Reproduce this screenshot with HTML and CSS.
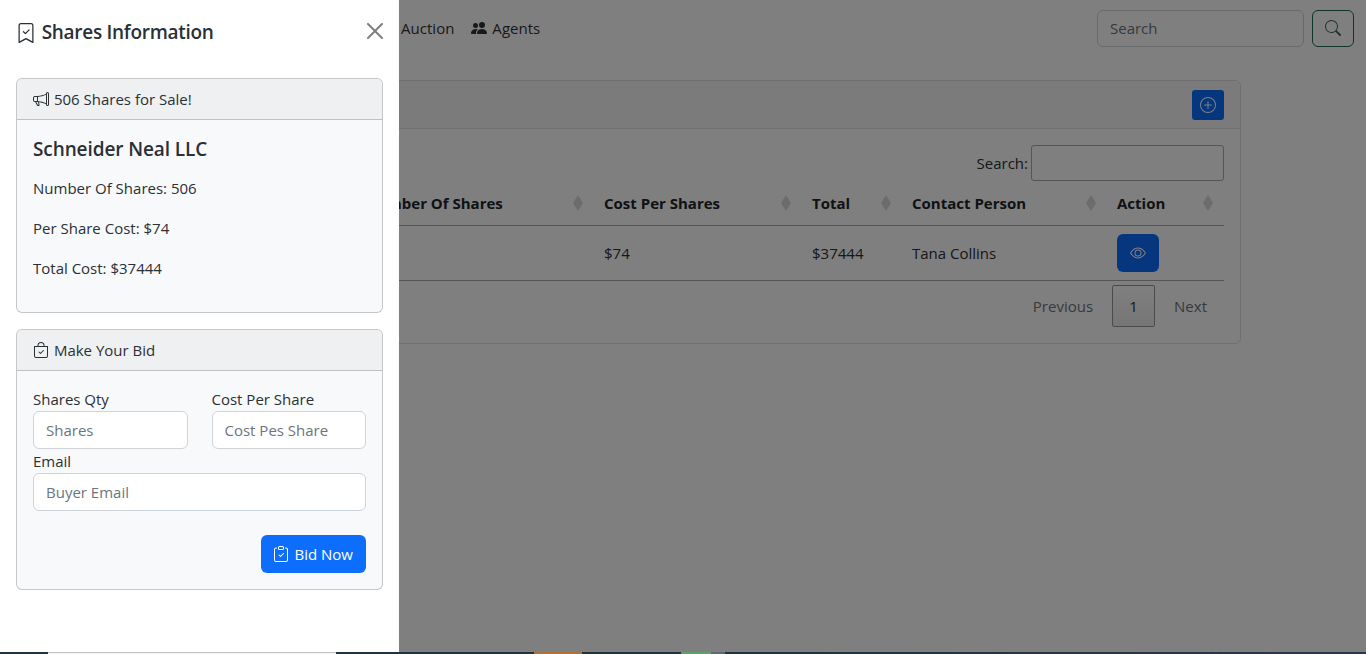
FILE: index.html
```html
<!DOCTYPE html>
<html lang="en">
<head>
<meta charset="utf-8">
<title>Shares Information</title>
<link rel="stylesheet" href="styles.css">
</head>
<body>
<div class="screen">
  <div class="page">
    <nav class="navbar">
      <ul class="nav-links">
        <li>Auction</li>
        <li class="nav-agents">
          <svg class="icon" viewBox="0 0 16 16" fill="currentColor"><path d="M7 14s-1 0-1-1 1-4 5-4 5 3 5 4-1 1-1 1H7zm4-6a3 3 0 1 0 0-6 3 3 0 0 0 0 6z"/><path d="M5.216 14A2.238 2.238 0 0 1 5 13c0-1.355.68-2.75 1.936-3.72A6.325 6.325 0 0 0 5 9c-4 0-5 3-5 4s1 1 1 1h4.216z"/><path d="M4.5 8a2.5 2.5 0 1 0 0-5 2.5 2.5 0 0 0 0 5z"/></svg>
          Agents
        </li>
      </ul>
      <form class="nav-search">
        <input class="control nav-input" placeholder="Search">
        <button type="button" class="btn-search">
          <svg class="icon" viewBox="0 0 16 16" fill="currentColor"><path d="M11.742 10.344a6.5 6.5 0 1 0-1.397 1.398h-.001c.03.04.062.078.098.115l3.85 3.85a1 1 0 0 0 1.415-1.414l-3.85-3.85a1.007 1.007 0 0 0-.115-.1zM12 6.5a5.5 5.5 0 1 1-11 0 5.5 5.5 0 0 1 11 0z"/></svg>
        </button>
      </form>
    </nav>

    <section class="list-card">
      <header class="list-head">
        <button type="button" class="btn-add">
          <svg class="icon" viewBox="0 0 16 16" fill="currentColor"><path d="M8 15A7 7 0 1 1 8 1a7 7 0 0 1 0 14zm0 1A8 8 0 1 0 8 0a8 8 0 0 0 0 16z"/><path d="M8 4a.5.5 0 0 1 .5.5v3h3a.5.5 0 0 1 0 1h-3v3a.5.5 0 0 1-1 0v-3h-3a.5.5 0 0 1 0-1h3v-3A.5.5 0 0 1 8 4z"/></svg>
        </button>
      </header>
      <div class="list-body">
        <label class="table-filter">Search:<input class="filter-input"></label>
        <table class="data-table">
          <colgroup>
            <col class="col-a"><col class="col-b"><col class="col-c"><col class="col-d"><col class="col-e"><col class="col-f">
          </colgroup>
          <thead>
            <tr>
              <th></th>
              <th><span class="th-label">Number Of Shares</span><i class="sort"></i></th>
              <th><span class="th-label">Cost Per Shares</span><i class="sort"></i></th>
              <th><span class="th-label">Total</span><i class="sort"></i></th>
              <th><span class="th-label">Contact Person</span><i class="sort"></i></th>
              <th><span class="th-label">Action</span><i class="sort"></i></th>
            </tr>
          </thead>
          <tbody>
            <tr>
              <td></td>
              <td></td>
              <td>$74</td>
              <td>$37444</td>
              <td>Tana Collins</td>
              <td>
                <button type="button" class="btn-view">
                  <svg class="icon" viewBox="0 0 16 16" fill="currentColor"><path d="M16 8s-3-5.5-8-5.5S0 8 0 8s3 5.5 8 5.5S16 8 16 8zM1.173 8a13.133 13.133 0 0 1 1.66-2.043C4.12 4.668 5.88 3.5 8 3.5c2.12 0 3.879 1.168 5.168 2.457A13.133 13.133 0 0 1 14.828 8c-.058.087-.122.183-.195.288-.335.48-.83 1.12-1.465 1.755C11.879 11.332 10.119 12.5 8 12.5c-2.12 0-3.879-1.168-5.168-2.457A13.134 13.134 0 0 1 1.172 8z"/><path d="M8 5.5a2.5 2.5 0 1 0 0 5 2.5 2.5 0 0 0 0-5zM4.5 8a3.5 3.5 0 1 1 7 0 3.5 3.5 0 0 1-7 0z"/></svg>
                </button>
              </td>
            </tr>
          </tbody>
        </table>
        <div class="pager">
          <span class="pager-link">Previous</span>
          <span class="pager-current">1</span>
          <span class="pager-link pager-next">Next</span>
        </div>
      </div>
    </section>

    <div class="backdrop"></div>

    <aside class="panel">
      <header class="panel-head">
        <h5 class="panel-title">
          <svg class="icon icon-title" viewBox="0 0 16 16" fill="currentColor"><path fill-rule="evenodd" d="M10.854 5.146a.5.5 0 0 1 0 .708l-3 3a.5.5 0 0 1-.708 0l-1.5-1.5a.5.5 0 1 1 .708-.708L7.5 7.793l2.646-2.647a.5.5 0 0 1 .708 0z"/><path d="M2 2a2 2 0 0 1 2-2h8a2 2 0 0 1 2 2v13.5a.5.5 0 0 1-.777.416L8 13.101l-5.223 2.815A.5.5 0 0 1 2 15.5V2zm2-1a1 1 0 0 0-1 1v12.566l4.723-2.482a.5.5 0 0 1 .554 0L13 14.566V2a1 1 0 0 0-1-1H4z"/></svg>
          Shares Information
        </h5>
        <button type="button" class="btn-close" aria-label="Close">
          <svg viewBox="0 0 16 16" fill="currentColor"><path d="M.293.293a1 1 0 011.414 0L8 6.586 14.293.293a1 1 0 111.414 1.414L9.414 8l6.293 6.293a1 1 0 01-1.414 1.414L8 9.414l-6.293 6.293a1 1 0 01-1.414-1.414L6.586 8 .293 1.707a1 1 0 010-1.414z"/></svg>
        </button>
      </header>
      <div class="panel-body">
        <div class="card card-info">
          <div class="card-head">
            <svg class="icon" viewBox="0 0 16 16" fill="currentColor"><path d="M13 2.5a1.5 1.5 0 0 1 3 0v11a1.5 1.5 0 0 1-3 0v-.214c-2.162-1.241-4.49-1.843-6.912-2.083l.405 2.712A1 1 0 0 1 5.51 15.1h-.548a1 1 0 0 1-.916-.599l-1.85-3.49a68.14 68.14 0 0 0-.202-.003A2.014 2.014 0 0 1 0 9V7a2.02 2.02 0 0 1 1.992-2.013 74.663 74.663 0 0 0 2.483-.075c3.043-.154 6.148-.849 8.525-2.199V2.5zm1 0v11a.5.5 0 0 0 1 0v-11a.5.5 0 0 0-1 0zm-1 1.35c-2.344 1.205-5.209 1.842-8 2.033v4.233c.18.01.359.022.537.036 2.568.189 5.093.744 7.463 1.993V3.85zm-9 6.215v-4.13a95.09 95.09 0 0 1-1.992.052A1.02 1.02 0 0 0 1 7v2c0 .55.448 1.002 1.006 1.009A60.49 60.49 0 0 1 4 10.065zm-.657.975 1.609 3.037.01.024h.548l-.002-.014-.443-2.966a68.019 68.019 0 0 0-1.722-.082z"/></svg>
            506 Shares for Sale!
          </div>
          <div class="card-body">
            <h5 class="company">Schneider Neal LLC</h5>
            <p>Number Of Shares: 506</p>
            <p>Per Share Cost: $74</p>
            <p>Total Cost: $37444</p>
          </div>
        </div>

        <div class="card">
          <div class="card-head">
            <svg class="icon" viewBox="0 0 16 16" fill="currentColor"><path fill-rule="evenodd" d="M10.854 8.146a.5.5 0 0 1 0 .708l-3 3a.5.5 0 0 1-.708 0l-1.5-1.5a.5.5 0 0 1 .708-.708L7.5 10.793l2.646-2.647a.5.5 0 0 1 .708 0z"/><path d="M8 1a2.5 2.5 0 0 1 2.5 2.5V4h-5v-.5A2.5 2.5 0 0 1 8 1zm3.5 3v-.5a3.5 3.5 0 1 0-7 0V4H1v10a2 2 0 0 0 2 2h10a2 2 0 0 0 2-2V4h-3.5zM2 5h12v9a1 1 0 0 1-1 1H3a1 1 0 0 1-1-1V5z"/></svg>
            Make Your Bid
          </div>
          <form class="card-body bid-form">
            <div class="field">
              <label>Shares Qty</label>
              <input class="control" placeholder="Shares">
            </div>
            <div class="field">
              <label>Cost Per Share</label>
              <input class="control" placeholder="Cost Pes Share">
            </div>
            <div class="field field-wide">
              <label>Email</label>
              <input class="control" placeholder="Buyer Email">
            </div>
            <div class="bid-actions">
              <button type="button" class="btn-bid">
                <svg class="icon" viewBox="0 0 16 16" fill="currentColor"><path fill-rule="evenodd" d="M10.854 7.146a.5.5 0 0 1 0 .708l-3 3a.5.5 0 0 1-.708 0l-1.5-1.5a.5.5 0 1 1 .708-.708L7.5 9.793l2.646-2.647a.5.5 0 0 1 .708 0z"/><path d="M4 1.5H3a2 2 0 0 0-2 2V14a2 2 0 0 0 2 2h10a2 2 0 0 0 2-2V3.5a2 2 0 0 0-2-2h-1v1h1a1 1 0 0 1 1 1V14a1 1 0 0 1-1 1H3a1 1 0 0 1-1-1V3.5a1 1 0 0 1 1-1h1v-1z"/><path d="M9.5 1a.5.5 0 0 1 .5.5v1a.5.5 0 0 1-.5.5h-3a.5.5 0 0 1-.5-.5v-1a.5.5 0 0 1 .5-.5h3zm-3-1A1.5 1.5 0 0 0 5 1.5v1A1.5 1.5 0 0 0 6.5 4h3A1.5 1.5 0 0 0 11 2.5v-1A1.5 1.5 0 0 0 9.5 0h-3z"/></svg>
                Bid Now
              </button>
            </div>
          </form>
        </div>
      </div>
    </aside>
  </div>
  <div class="strip">
    <span class="seg seg-1"></span>
    <span class="seg seg-2"></span>
    <span class="seg seg-3"></span>
    <span class="seg seg-4"></span>
    <span class="seg seg-5"></span>
    <span class="seg seg-6"></span>
    <span class="seg seg-7"></span>
    <span class="seg seg-8"></span>
  </div>
</div>
</body>
</html>
```
FILE: styles.css
```css
* { box-sizing: border-box; }

html, body { margin: 0; padding: 0; overflow: hidden; }

body {
  font-family: "Open Sans", "Noto Sans", "Liberation Sans", sans-serif;
  font-size: 15px;
  line-height: 24px;
  color: #2b3035;
  background: #fff;
}

.screen { display: flex; flex-direction: column; height: 654px; }

.page { position: relative; height: 652px; overflow: hidden; background: #fff; }

.icon { width: 16px; height: 16px; display: inline-block; vertical-align: -2px; flex: none; }

/* navbar */
.navbar {
  display: flex;
  align-items: center;
  justify-content: space-between;
  height: 56px;
  padding: 0 12px 0 401px;
}
.nav-links { display: flex; gap: 16px; list-style: none; margin: 0; padding: 0; color: #333; letter-spacing: .03px; }
.nav-links li:first-child { margin-right: 1px; }
.nav-agents .icon { margin-right: 1px; }
.nav-search { display: flex; gap: 8px; }
.nav-input { width: 207px; height: 37px; }
.btn-search {
  width: 42px;
  height: 37px;
  padding: 0;
  background: none;
  border: 1px solid #1f6b58;
  border-radius: 6px;
  color: #3f6a5e;
}

/* list card */
.list-card {
  width: 1116px;
  height: 264px;
  margin: 24px 0 0 125px;
  border: 1px solid #dfdfdf;
  border-radius: 6px;
}
.list-head {
  display: flex;
  justify-content: flex-end;
  height: 48px;
  padding: 9px 16px 0;
  background: #f7f7f7;
  border-bottom: 1px solid #dfdfdf;
  border-radius: 6px 6px 0 0;
}
.btn-add {
  width: 32px;
  height: 30px;
  padding: 0;
  border: 0;
  border-radius: 3px;
  background: #0d6efd;
  color: #fff;
  line-height: 1;
}
.list-body { padding: 16px 16px 0; }
.table-filter { display: flex; justify-content: flex-end; align-items: center; gap: 3px; height: 36px; }
.filter-input { width: 193px; height: 36px; border: 1px solid #aaa; border-radius: 3px; background: #fff; }

.data-table { width: 100%; border-collapse: collapse; table-layout: fixed; }
.col-a { width: 215px; }
.col-b { width: 239px; }
.col-c { width: 208px; }
.col-d { width: 100px; }
.col-e { width: 205px; }
.col-f { width: 115px; }
.data-table th {
  position: relative;
  height: 44px;
  padding: 0 8px;
  text-align: left;
  font-weight: 700;
  color: #212529;
  border-bottom: 1px solid #aaa;
  white-space: nowrap;
}
.data-table td {
  height: 55px;
  padding: 0 8px;
  border-bottom: 1px solid #aaa;
  white-space: nowrap;
}
.sort {
  position: absolute;
  right: 13px;
  top: 14px;
  width: 10px;
  height: 16px;
  background: #d8d8d8;
  clip-path: polygon(50% 0, 100% 50%, 50% 100%, 0 50%);
}
.data-table th:last-child .sort { right: 11px; }
.btn-view {
  width: 42px;
  height: 38px;
  padding: 2px 0 0;
  border: 0;
  border-radius: 6px;
  background: #0d6efd;
  color: #fff;
  display: block;
}
.pager { display: flex; justify-content: flex-end; align-items: center; margin-top: 4px; color: #6c757d; }
.pager-link { padding: 0 19px 0 17px; }
.pager-next { padding: 0 17px 0 19px; }
.pager-current {
  width: 43px;
  height: 42px;
  line-height: 40px;
  text-align: center;
  color: #333;
  border: 1px solid #979797;
  border-radius: 2px;
  background: linear-gradient(#fff, #ececec);
}

/* overlay */
.backdrop { position: absolute; inset: 0; background: rgba(0, 0, 0, .5); }

.panel {
  position: absolute;
  left: 0;
  top: 0;
  bottom: 0;
  width: 399px;
  background: #fff;
  display: flex;
  flex-direction: column;
}
.panel-head {
  display: flex;
  align-items: center;
  justify-content: space-between;
  height: 62px;
  padding: 0 16px;
}
.panel-title { margin: 2px 0 0; font-size: 19px; font-weight: 600; line-height: 24px; letter-spacing: -.28px; }
.icon-title { width: 20px; height: 20px; vertical-align: -4px; margin-right: 1px; }
.btn-close {
  width: 16px;
  height: 16px;
  padding: 0;
  border: 0;
  background: none;
  color: #000;
  opacity: .5;
}
.btn-close svg { display: block; width: 16px; height: 16px; }

.panel-body { padding: 16px 16px 0; }

.card {
  width: 367px;
  border: 1px solid rgba(0, 0, 0, .2);
  border-radius: 6px;
  background: #f8f9fa;
}
.card-info { margin-bottom: 16px; }
.card-head {
  height: 41px;
  padding: 8px 16px;
  background: #eff0f2;
  border-bottom: 1px solid rgba(0, 0, 0, .2);
  border-radius: 5px 5px 0 0;
}
.card-head .icon { margin-right: 1px; }
.card-body { padding: 16px; }
.card-body p { margin: 0 0 16px; }
.company { margin: 0 0 16px; font-size: 19px; font-weight: 600; line-height: 26px; height: 24px; letter-spacing: -.1px; }

.bid-form {
  display: grid;
  grid-template-columns: 1fr 1fr;
  column-gap: 24px;
}
.field { display: flex; flex-direction: column; }
.field-wide { grid-column: 1 / -1; }
.control {
  width: 100%;
  height: 38px;
  padding: 6px 12px;
  font: inherit;
  color: #212529;
  background: #fff;
  border: 1px solid #ced4da;
  border-radius: 6px;
}
.control::placeholder { color: #6c757d; opacity: 1; }
.nav-input { width: 207px; height: 37px; }
.bid-actions { grid-column: 1 / -1; display: flex; justify-content: flex-end; margin-top: 24px; }
.btn-bid {
  height: 38px;
  padding: 0 13px 0 12px;
  font: inherit;
  color: #fff;
  background: #0d6efd;
  border: 0;
  border-radius: 6px;
}
.btn-bid .icon { margin-right: 2px; }

/* bottom strip */
.strip { display: flex; height: 2px; background: #22333b; }
.seg { display: block; height: 2px; }
.seg-1 { width: 48px; background: #22333b; }
.seg-2 { width: 288px; background: #f2f2f2; border-top: 1px solid #c4c4c4; }
.seg-3 { width: 198px; background: #22333b; }
.seg-4 { width: 48px; background: #b0703a; }
.seg-5 { width: 99px; background: #22333b; }
.seg-6 { width: 30px; background: #5f9f6a; }
.seg-7 { width: 14px; background: #5e6a72; }
.seg-8 { flex: 1; background: linear-gradient(90deg, #22333b, #2a3550); }
```
